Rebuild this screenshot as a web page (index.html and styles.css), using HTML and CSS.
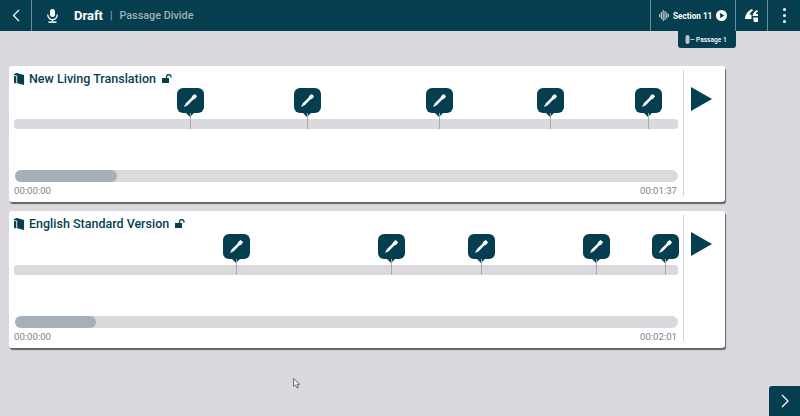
FILE: index.html
```html
<!DOCTYPE html>
<html>
<head>
    <meta charset="UTF-8">
    <title>Passage Divide</title>
    <link rel="stylesheet" href="styles.css">
</head>
<body>
    <svg class="icon-defs" width="0" height="0">
        <symbol id="dropper" viewBox="0 0 16 16">
            <path d="M1 15 L3 11 L9 5 L10 3 L12.5 1 L15 3.5 L13 6 L11 7 L5 13 Z" fill="#fff"/>
        </symbol>
        <symbol id="book" viewBox="0 0 12 13">
            <path d="M0 1 L3 0 L11 2 L11 13 L3.5 11 L3.5 3 L0 2 Z" fill="#053f4f"/>
            <path d="M0 3 L2.5 3.8 L2.5 11.5 L0 10.5 Z" fill="#053f4f"/>
        </symbol>
        <symbol id="lock" viewBox="0 0 11 9">
            <rect x="0" y="4" width="7" height="5" fill="#053f4f"/>
            <path d="M4.5 4 V2.8 A2.2 2.2 0 0 1 9 2.8 V3.5" fill="none" stroke="#053f4f" stroke-width="1.3"/>
        </symbol>
    </svg>

    <header class="topbar">
        <button class="back-button">
            <svg width="8" height="13" viewBox="0 0 8 13"><path d="M7 1 L1.5 6.5 L7 12" fill="none" stroke="#fff" stroke-width="1.2"/></svg>
        </button>
        <svg class="mic-icon" width="11" height="14" viewBox="0 0 11 14"><rect x="3" y="0" width="5" height="8" rx="2.5" fill="#fff"/><path d="M0.8 5.5 V6 A4.7 4.7 0 0 0 10.2 6 V5.5" fill="none" stroke="#fff" stroke-width="1.3"/><rect x="4.8" y="10" width="1.4" height="2.5" fill="#fff"/><rect x="1.5" y="12.4" width="8" height="1.5" fill="#fff"/></svg>
        <span class="step-name">Draft</span>
        <span class="step-sep">|</span>
        <span class="step-task">Passage Divide</span>
        <div class="section-box">
            <svg width="10" height="11" viewBox="0 0 10 11"><g fill="#b9c6cb"><rect x="0" y="4" width="1.2" height="3"/><rect x="1.8" y="2" width="1.2" height="7"/><rect x="3.6" y="0" width="1.2" height="11"/><rect x="5.4" y="1" width="1.2" height="9"/><rect x="7.2" y="2.5" width="1.2" height="6"/><rect x="8.8" y="4" width="1.2" height="3"/></g></svg>
            <span class="section-label">Section 11</span>
            <svg width="11" height="11" viewBox="0 0 12 12"><circle cx="6" cy="6" r="6" fill="#fff"/><path d="M4.5 3 L9 6 L4.5 9 Z" fill="#053f4f"/></svg>
        </div>
        <button class="icon-box">
            <svg width="13" height="13" viewBox="0 0 13 13"><path d="M0 10 C0 6 3 1.5 7 0 L8 1.6 C6 3 4.8 4.5 4.6 5.8 L6.5 5.8 L6.5 10 Z" fill="#fff"/><path d="M8.2 4.5 C9 3 10.5 1.5 12 1 L13 2.6 C11.8 3.3 11 4.2 10.8 5 L13 5 L13 7 L7.5 7 Z" fill="#fff"/><path d="M8 8.5 L13 8.5 L13 13 L9 13 Z" fill="#fff"/></svg>
        </button>
        <button class="icon-box menu-box">
            <span class="dot"></span><span class="dot"></span><span class="dot"></span>
        </button>
        <div class="passage-tab">
            <svg width="10" height="9" viewBox="0 0 10 9"><rect x="0.5" y="0" width="4" height="9" rx="2" fill="#b9c6cb"/><rect x="5.5" y="4" width="4" height="1" fill="#b9c6cb"/></svg>
            <span>Passage 1</span>
        </div>
    </header>

    <main class="content">
        <section class="card">
            <div class="card-body">
                <div class="card-title">
                    <svg class="book-icon" width="11" height="12"><use href="#book"/></svg>
                    <span>New Living Translation</span>
                    <svg class="lock-icon" width="11" height="9"><use href="#lock"/></svg>
                </div>
                <div class="wave">
                    <div class="track"></div>
                    <div class="marker" style="left: 176px"><svg width="15" height="15"><use href="#dropper"/></svg></div>
                    <div class="marker" style="left: 293px"><svg width="15" height="15"><use href="#dropper"/></svg></div>
                    <div class="marker" style="left: 425px"><svg width="15" height="15"><use href="#dropper"/></svg></div>
                    <div class="marker" style="left: 536px"><svg width="15" height="15"><use href="#dropper"/></svg></div>
                    <div class="marker" style="left: 634px"><svg width="15" height="15"><use href="#dropper"/></svg></div>
                </div>
                <div class="scroll-track"><div class="scroll-thumb" style="width: 102px"></div></div>
                <div class="times"><span>00:00:00</span><span>00:01:37</span></div>
            </div>
            <div class="play-col"><div class="play-icon"></div></div>
        </section>

        <section class="card">
            <div class="card-body">
                <div class="card-title">
                    <svg class="book-icon" width="11" height="12"><use href="#book"/></svg>
                    <span>English Standard Version</span>
                    <svg class="lock-icon" width="11" height="9"><use href="#lock"/></svg>
                </div>
                <div class="wave">
                    <div class="track"></div>
                    <div class="marker" style="left: 222px"><svg width="15" height="15"><use href="#dropper"/></svg></div>
                    <div class="marker" style="left: 377px"><svg width="15" height="15"><use href="#dropper"/></svg></div>
                    <div class="marker" style="left: 467px"><svg width="15" height="15"><use href="#dropper"/></svg></div>
                    <div class="marker" style="left: 582px"><svg width="15" height="15"><use href="#dropper"/></svg></div>
                    <div class="marker" style="left: 651px"><svg width="15" height="15"><use href="#dropper"/></svg></div>
                </div>
                <div class="scroll-track"><div class="scroll-thumb" style="width: 81px"></div></div>
                <div class="times"><span>00:00:00</span><span>00:02:01</span></div>
            </div>
            <div class="play-col"><div class="play-icon"></div></div>
        </section>
    </main>

    <svg class="cursor" width="8" height="11" viewBox="0 0 8 11"><path d="M0.5 0.5 L0.5 8.5 L2.5 7 L4 10 L5.5 9.3 L4 6.5 L6.8 6.2 Z" fill="#eee" stroke="#555" stroke-width="0.8"/></svg>

    <button class="next-button">
        <svg width="8" height="14" viewBox="0 0 8 14"><path d="M1 1 L7 7 L1 13" fill="none" stroke="#fff" stroke-width="1.3"/></svg>
    </button>
</body>
</html>
```

FILE: styles.css
```css
html, body {
    margin: 0;
    height: 416px;
    overflow: hidden;
}

body {
    position: relative;
    background-color: #d9d9de;
    font-family: Roboto, "Liberation Sans", sans-serif;
}

button {
    border: none;
    background: none;
    padding: 0;
}

.icon-defs {
    position: absolute;
}

/* top bar */
.topbar {
    position: relative;
    display: flex;
    align-items: center;
    height: 31px;
    background-color: #053f4f;
    color: #ffffff;
}

.back-button {
    display: flex;
    align-items: center;
    justify-content: center;
    width: 31px;
    height: 31px;
    border-right: 1px solid #6f8f99;
    box-sizing: content-box;
}

.mic-icon {
    margin-left: 15px;
}

.step-name {
    margin-left: 16px;
    font-size: 13px;
    font-weight: 700;
}

.step-sep {
    margin-left: 7px;
    font-size: 10px;
    color: #9fb0b6;
}

.step-task {
    margin-left: 7px;
    font-size: 10.8px;
    font-weight: 500;
    color: #9fb0b6;
}

.section-box {
    display: flex;
    align-items: center;
    margin-left: auto;
    width: 86px;
    height: 31px;
    box-sizing: border-box;
    padding-left: 8px;
    border-left: 1px solid #6f8f99;
    border-right: 1px solid #6f8f99;
}

.section-label {
    width: 39px;
    margin: 0 4px 0 4px;
    font-size: 8.2px;
    font-weight: 700;
    white-space: nowrap;
}

.icon-box {
    display: flex;
    align-items: center;
    justify-content: center;
    width: 32px;
    height: 31px;
    border-right: 1px solid #6f8f99;
}

.menu-box {
    flex-direction: column;
    gap: 3px;
    border-right: none;
}

.dot {
    width: 3px;
    height: 3px;
    border-radius: 50%;
    background-color: #ffffff;
}

.passage-tab {
    position: absolute;
    top: 31px;
    left: 678px;
    display: flex;
    align-items: center;
    gap: 1px;
    width: 58px;
    height: 17px;
    padding-left: 7px;
    box-sizing: border-box;
    background-color: #053f4f;
    border-radius: 0 0 3px 3px;
    font-size: 6.6px;
    font-weight: 500;
    white-space: nowrap;
}

/* cards */
.content {
    display: flex;
    flex-direction: column;
    gap: 9px;
    width: 716px;
    margin-left: 9px;
    padding-top: 35px;
}

.card {
    display: flex;
    height: 136px;
    background-color: #ffffff;
    border-radius: 3px;
    box-shadow: 1px 2px 1px 0 rgba(0, 0, 0, 0.55);
}

.card + .card {
    height: 137px;
}

.card-body {
    flex: 1;
    display: flex;
    flex-direction: column;
    padding: 5px 5px 0 5px;
    min-width: 0;
}

.card-title {
    display: flex;
    align-items: center;
    height: 15px;
    font-size: 12.5px;
    font-weight: 500;
    color: #053f4f;
}

.book-icon {
    margin-right: 4px;
}

.lock-icon {
    margin-left: 6px;
}

/* markers over the audio track */
.wave {
    position: relative;
    height: 38px;
    margin-top: 33px;
}

.card + .card .wave {
    margin-top: 34px;
}

.track {
    height: 10px;
    border-radius: 3px;
    background-color: #d9d9de;
}

.marker {
    position: absolute;
    top: -31px;
    display: flex;
    align-items: center;
    justify-content: center;
    width: 27px;
    height: 25px;
    margin-left: -13px;
    border-radius: 6px;
    background-color: #053f4f;
}

.marker::before {
    content: "";
    position: absolute;
    top: 25px;
    left: 9px;
    border-left: 4px solid transparent;
    border-right: 4px solid transparent;
    border-top: 4px solid #053f4f;
}

.marker::after {
    content: "";
    position: absolute;
    top: 25px;
    left: 13px;
    width: 1px;
    height: 16px;
    background-color: #a3acb2;
}

.scroll-track {
    height: 12px;
    margin: 13px 0 0 1px;
    border-radius: 6px;
    background-color: #d9d9de;
}

.scroll-thumb {
    height: 12px;
    border-radius: 6px;
    background-color: #a8b0b7;
}

.times {
    display: flex;
    justify-content: space-between;
    margin-top: 3px;
    padding-right: 1px;
    font-size: 9.6px;
    color: #7d8489;
}

.play-col {
    display: flex;
    width: 41px;
    height: 126px;
    margin-top: 4px;
    border-left: 1px solid #d0d2d6;
}

.play-icon {
    margin: 17px 0 0 7px;
    width: 0;
    height: 0;
    border-top: 12px solid transparent;
    border-bottom: 12px solid transparent;
    border-left: 21px solid #053f4f;
}

.cursor {
    position: absolute;
    left: 293px;
    top: 378px;
}

.next-button {
    position: absolute;
    right: 0;
    bottom: 0;
    display: flex;
    align-items: center;
    justify-content: center;
    width: 31px;
    height: 30px;
    background-color: #053f4f;
    border-radius: 3px 0 0 0;
}
```
